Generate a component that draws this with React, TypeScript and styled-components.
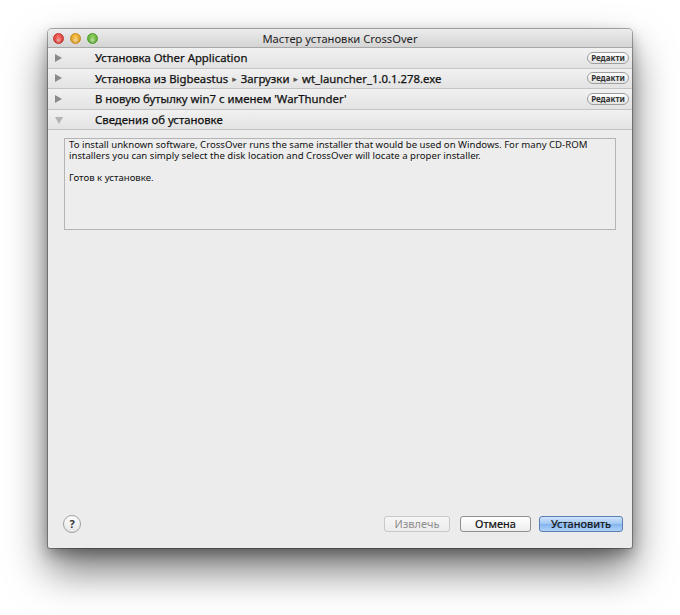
import React from "react";
import styled, { createGlobalStyle } from "styled-components";

const Global = createGlobalStyle`
  html, body { margin: 0; padding: 0; background: #ffffff; }
  body { font-family: "Noto Sans", "DejaVu Sans", sans-serif; }
`;

const Page = styled.div`
  width: 680px;
  height: 615px;
  padding: 29px 0 0 48px;
  box-sizing: border-box;
`;

const Window = styled.div`
  width: 584px;
  height: 519px;
  background: #ececec;
  display: flex;
  flex-direction: column;
  border-radius: 4px 4px 2px 2px;
  box-shadow: 0 0 0 1px rgba(0, 0, 0, 0.3), 0 22px 40px rgba(0, 0, 0, 0.55),
    0 6px 14px rgba(0, 0, 0, 0.3);
  overflow: hidden;
`;

const TitleBar = styled.div`
  height: 18px;
  flex: none;
  display: grid;
  grid-template-columns: 1fr auto 1fr;
  align-items: center;
  background: linear-gradient(#ececec, #d4d4d4);
  border-bottom: 1px solid #a8a8a8;
  padding: 0 5px;
`;

const Lights = styled.div`
  display: flex;
  gap: 6px;
`;

const Light = styled.span<{ $c: string; $d: string }>`
  width: 11px;
  height: 11px;
  border-radius: 50%;
  box-sizing: border-box;
  border: 1px solid ${(p) => p.$d};
  background: radial-gradient(circle at 50% 70%, #ffffff88 0, transparent 45%),
    radial-gradient(circle at 50% 30%, ${(p) => p.$c}, ${(p) => p.$d});
`;

const Title = styled.div`
  font-size: 11.2px;
  color: #222;
`;

const Row = styled.div`
  height: 19.6px;
  flex: none;
  display: flex;
  align-items: center;
  background: linear-gradient(#f1f1f1, #e3e3e3);
  border-bottom: 1px solid #c4c4c4;
  padding: 0 3px 0 7px;
`;

const Arrow = styled.span<{ $open?: boolean }>`
  width: 0;
  height: 0;
  ${(p) =>
    p.$open
      ? `border-left: 4px solid transparent; border-right: 4px solid transparent; border-top: 7px solid #b4b4b4; margin-top: 2px;`
      : `border-top: 4px solid transparent; border-bottom: 4px solid transparent; border-left: 7px solid #8a8a8a;`}
  margin-right: ${(p) => (p.$open ? "32px" : "33px")};
`;

const RowLabel = styled.span`
  flex: 1;
  font-size: 11.35px;
  color: #111;
  white-space: nowrap;
  -webkit-text-stroke: 0.25px #111;
`;

const Sep = styled.span`
  font-family: "DejaVu Sans", sans-serif;
  font-size: 9px;
  color: #555;
  -webkit-text-stroke: 0;
  margin: 0 4px;
  vertical-align: 1px;
`;

const EditButton = styled.button`
  width: 42px;
  height: 12px;
  padding: 0;
  border-radius: 6px;
  border: 1px solid #9e9e9e;
  background: linear-gradient(#ffffff, #e4e4e4);
  font-family: inherit;
  font-size: 8px;
  font-weight: bold;
  color: #333;
  line-height: 10px;
`;

const Content = styled.div`
  padding: 8px 16px 0;
`;

const InfoBox = styled.div`
  height: 92px;
  box-sizing: border-box;
  border: 1px solid #b4b4b4;
  background: #ededed;
  padding: 0 4px;
  font-size: 9.6px;
  line-height: 11px;
  color: #111;
`;

const Para = styled.p`
  margin: 0 0 11px;
`;

const Spacer = styled.div`
  flex: 1;
`;

const Footer = styled.div`
  display: flex;
  align-items: center;
  padding: 0 9px 15px 15px;
`;

const Help = styled.button`
  width: 18px;
  height: 18px;
  border-radius: 50%;
  border: 1px solid #a0a0a0;
  background: linear-gradient(#ffffff, #e6e6e6);
  padding: 0;
  font-family: inherit;
  font-size: 11px;
  font-weight: bold;
  color: #333;
  line-height: 16px;
  margin-right: auto;
`;

const Btn = styled.button<{ $w: number; $kind?: "default" | "disabled" }>`
  width: ${(p) => p.$w}px;
  height: 16px;
  padding: 0;
  border-radius: 3px;
  font-family: inherit;
  font-size: 11px;
  line-height: 14px;
  -webkit-text-stroke: ${(p) => (p.$kind === "disabled" ? "0" : "0.2px")} currentColor;
  border: 1px solid
    ${(p) =>
      p.$kind === "default" ? "#5a7fb5" : p.$kind === "disabled" ? "#c8c8c8" : "#8f8f8f"};
  background: ${(p) =>
    p.$kind === "default"
      ? "linear-gradient(#cfe3fb, #9fc6f3 50%, #82b3ee 51%, #b0d3f8)"
      : p.$kind === "disabled"
      ? "linear-gradient(#f6f6f6, #ececec)"
      : "linear-gradient(#ffffff, #ededed)"};
  color: ${(p) => (p.$kind === "disabled" ? "#8e8e8e" : "#111")};
  margin-left: ${(p) => (p.$kind === "default" ? "8px" : "10px")};
`;

const rows: string[][] = [
  ["Установка Other Application"],
  ["Установка из Bigbeastus", "Загрузки", "wt_launcher_1.0.1.278.exe"],
  ["В новую бутылку win7 с именем 'WarThunder'"],
];

export default function App() {
  return (
    <>
      <Global />
      <Page>
        <Window>
          <TitleBar>
            <Lights>
              <Light $c="#fb6b62" $d="#c2302a" />
              <Light $c="#fcc44b" $d="#c98a17" />
              <Light $c="#8fd25b" $d="#4f9a2a" />
            </Lights>
            <Title>Мастер установки CrossOver</Title>
            <span />
          </TitleBar>
          {rows.map((parts) => (
            <Row key={parts.join()}>
              <Arrow />
              <RowLabel>
                {parts.map((p, i) => (
                  <React.Fragment key={p}>
                    {i > 0 && <Sep>▸</Sep>}
                    {p}
                  </React.Fragment>
                ))}
              </RowLabel>
              <EditButton>Редакти</EditButton>
            </Row>
          ))}
          <Row>
            <Arrow $open />
            <RowLabel>Сведения об установке</RowLabel>
          </Row>
          <Content>
            <InfoBox>
              <Para>
                To install unknown software, CrossOver runs the same installer that would be used on
                Windows. For many CD-ROM installers you can simply select the disk location and
                CrossOver will locate a proper installer.
              </Para>
              <Para>Готов к установке.</Para>
            </InfoBox>
          </Content>
          <Spacer />
          <Footer>
            <Help>?</Help>
            <Btn $w={66} $kind="disabled">Извлечь</Btn>
            <Btn $w={71}>Отмена</Btn>
            <Btn $w={84} $kind="default">Установить</Btn>
          </Footer>
        </Window>
      </Page>
    </>
  );
}
